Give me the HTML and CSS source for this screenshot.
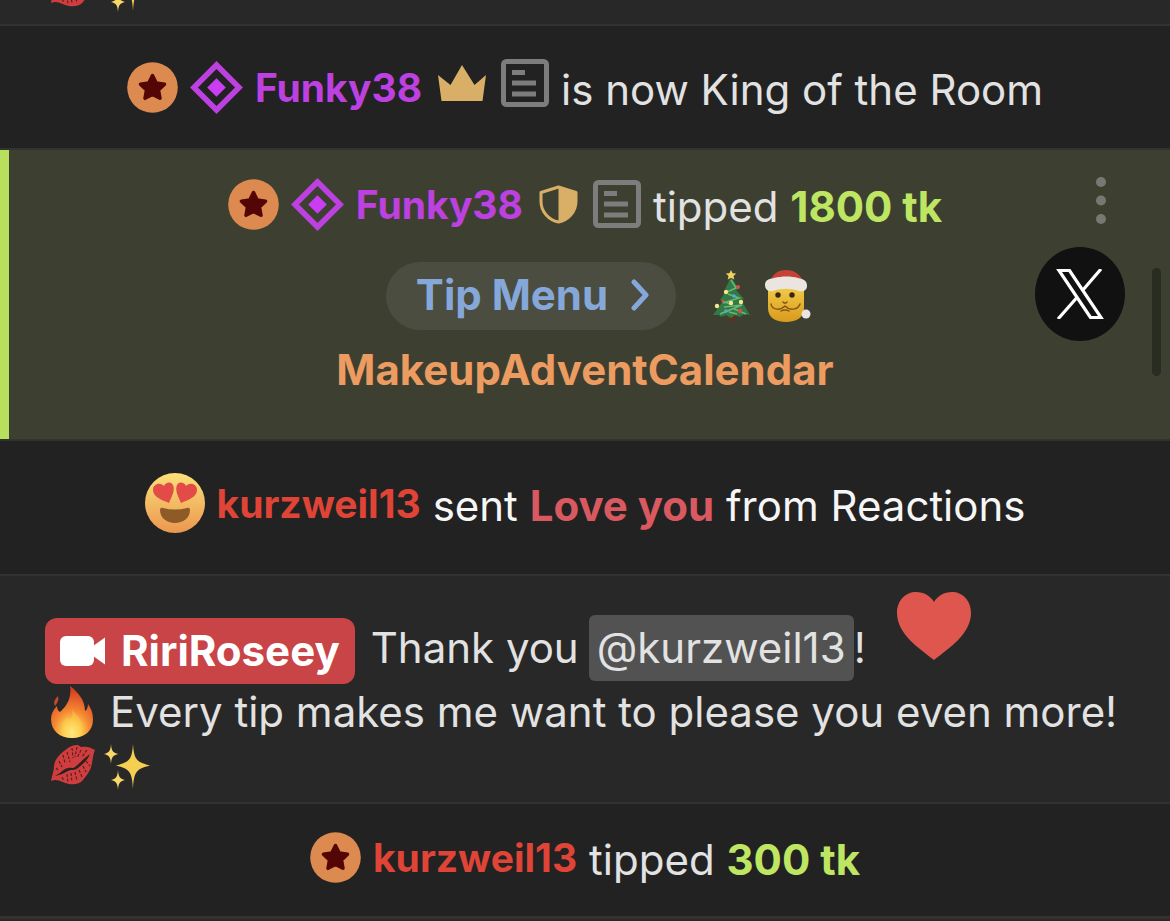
FILE: index.html
```html
<!DOCTYPE html>
<html lang="en">
<head>
  <meta charset="UTF-8">
  <meta name="viewport" content="width=device-width, initial-scale=1.0">
  <title>Room Chat</title>
  <link rel="stylesheet" href="styles.css">
</head>
<body>
  <!-- Shared icons -->
  <svg class="sprite" aria-hidden="true">
    <defs>
      <linearGradient id="faceFill" x1="0" y1="0" x2="0" y2="1">
        <stop offset="0" stop-color="#fbe07a"/>
        <stop offset="1" stop-color="#eb974e"/>
      </linearGradient>
      <radialGradient id="fireFill" cx="0.5" cy="0.9" r="0.85">
        <stop offset="0" stop-color="#fff9a0"/>
        <stop offset="0.25" stop-color="#fdcf4c"/>
        <stop offset="0.5" stop-color="#f58a34"/>
        <stop offset="1" stop-color="#d63a22"/>
      </radialGradient>
      <linearGradient id="santaFill" x1="0" y1="0" x2="0" y2="1">
        <stop offset="0" stop-color="#f3cf4c"/>
        <stop offset="1" stop-color="#d99a1c"/>
      </linearGradient>
    </defs>

    <symbol id="star" viewBox="0 0 51 51">
      <circle cx="25.5" cy="25.5" r="25.3" fill="#dc8a4f"/>
      <path d="M25.5 13.5l3.700 7.500 8.300 1.200-6 5.800 1.500 8.300-7.500-3.900-7.500 3.900 1.500-8.300-6-5.800 8.300-1.200z" fill="#540505" stroke="#540505" stroke-width="3.500" stroke-linejoin="round"/>
    </symbol>

    <symbol id="diamond" viewBox="0 0 53 53">
      <path d="M26.500 4L49 26.500 26.500 49 4 26.500z" fill="none" stroke="#bd40e0" stroke-width="5.600"/>
      <path d="M26.500 17.200l9.300 9.300-9.300 9.300-9.300-9.300z" fill="#ca3df2"/>
    </symbol>

    <symbol id="crown" viewBox="0 0 48 48">
      <path d="M0 16l12.500 10L24 6l12.500 20L48 16l-3.500 26h-41z" fill="#d9ae66"/>
    </symbol>

    <symbol id="shield" viewBox="0 0 39 39">
      <path d="M19.500 2L37 7.500v9C37 27 29 35 19.500 37 10 35 2 27 2 16.500v-9z" fill="none" stroke="#d9ae66" stroke-width="3" stroke-linejoin="round"/>
      <path d="M19.500 1.500L37 7.500v9C37 27 29 35 19.500 37z" fill="#d9ae66"/>
    </symbol>

    <symbol id="note" viewBox="0 0 48 48">
      <rect x="2.500" y="2.500" width="43" height="43" rx="3" fill="none" stroke="#7d7d7d" stroke-width="5"/>
      <path d="M11 13.500h13M11 24h24M11 35h24" stroke="#7d7d7d" stroke-width="5"/>
    </symbol>

    <symbol id="heart" viewBox="0 0 74 68">
      <path d="M37 68C22 56 0 42 0 21 0 8 9 0 19 0c8 0 14.500 4 18 10C40.500 4 47 0 55 0c10 0 19 8 19 21 0 21-22 35-37 47z" fill="#df564e"/>
    </symbol>

    <symbol id="heart-eyes" viewBox="0 0 60 60">
      <circle cx="30" cy="30" r="30" fill="url(#faceFill)"/>
      <path d="M24 30C17 27 8 24 8 17c0-5 5-7.500 9-5.500 1 .5 1.500 1 2 1.500C20.500 9 26 8 28 12c2.500 5-1.500 12-4 18z" fill="#e34b47"/>
      <path d="M36 30c7-3 16-6 16-13 0-5-5-7.500-9-5.500-1 .5-1.500 1-2 1.500C39.500 9 34 8 32 12c-2.500 5 1.500 12 4 18z" fill="#e34b47"/>
      <path d="M15 37c0-2 1.500-2.500 3-2 8 2 16 2 24 0 1.500-.5 3 0 3 2 0 8-7 13-15 13s-15-5-15-13z" fill="#8e5a28"/>
    </symbol>

    <symbol id="camera" viewBox="0 0 45 30">
      <rect x="0" y="0" width="34" height="30" rx="6" fill="#fff"/>
      <path d="M33 10L45 1.500v27L33 20z" fill="#fff"/>
    </symbol>

    <symbol id="fire" viewBox="0 0 44 54">
      <path d="M20 1c8 6 15 14 15 25 2-1 3-4 3-7 4 6 5 10 5 16 0 11-9 18-21 18S1 46 1 34c0-5 2-9 6-13 0 3 1 5 3 6C17 21 22 12 20 1z" fill="url(#fireFill)"/>
      <path d="M8 11c1 4 0 6-3 10-2-4 0-7 3-10z" fill="#c8482e"/>
      <path d="M22 24c5 7 10 11 10 18 0 6-5 10-10 10s-10-4-10-10c0-5 3-7 5-10 1 2 2 3 3 3 3-4 3-8 2-11z" fill="#fdd052" opacity="0.4"/>
    </symbol>

    <symbol id="lips" viewBox="0 0 46 42">
      <path d="M1 37C2 31 4 27 4 22 5 14 11 9 18 4c3-2 6-3 9-3 2 0 3 2 5 2 4-1 8 0 13 3-2 4-2 8-3 13-1 7-5 12-9 17-3 4-9 5-14 4C12 39 8 34 1 37z" fill="#cf3d3e"/>
      <path d="M5 32c6-3 8-7 13-8 3-1 4 1 7-1 4-3 8-8 15-13-3 7-7 10-12 14-4 3-6 1-10 3-4 2-7 4-13 5z" fill="#2f2020"/>
      <path d="M9 17l3 6M13 11l2 8M17 8l3 10M22 4l1 10M27 3l-2 10M31 6l-4 8M37 6l-5 7M6 24l3 3M12 33l2 4M17 30l1 8M21 29l1 9M25 28l2 9M29 26l3 7M33 22l3 6M36 17l4 5" stroke="#57201f" stroke-width="1.200" stroke-dasharray="3 1.500" fill="none"/>
    </symbol>

    <symbol id="sparkles" viewBox="0 0 46 46">
      <path d="M29 0c1 15 3 18 17 21.500C32 25 30 28 29 45c-1-17-3-20-17-23.500C26 18 28 15 29 0z" fill="#f5cf52"/>
      <path d="M7 0c.6 7 1.500 8.500 7.500 10C8.500 11.500 7.600 13 7 20 6.400 13 5.500 11.500 0 10 5.500 8.500 6.400 7 7 0z" fill="#f7d868"/>
      <path d="M14 26c.6 7 1.500 8.500 7 10-5.500 1.500-6.400 3-7 10-.6-7-1.500-8.500-7-10 5.500-1.500 6.400-3 7-10z" fill="#f7d868"/>
    </symbol>

    <symbol id="tree" viewBox="0 0 42 52">
      <rect x="18" y="45" width="8" height="6" fill="#5c3320"/>
      <path d="M21 7l8 12-3 1 8 9-3 1 9 15-6-1-4 3-5-2-4 3-5-3-5 2-2-2-6 0 10-14-3-1 7-10-2-1z" fill="#2f7a45"/>
      <path d="M21 10l5 8-9 4M18 24l11 4-16 5M14 37l18-2-22 9M24 39l12 5M12 31l8 3M19 42l8 2" stroke="#6eb478" stroke-width="1.600" fill="none"/>
      <path d="M21 0l1.600 3.200 3.600.4-2.700 2.500.8 3.500-3.300-1.800-3.300 1.800.8-3.500L15.800 3.600l3.600-.4z" fill="#f2d25c"/>
      <g fill="#f3e98c"><circle cx="16" cy="22" r="2.200"/><circle cx="31" cy="32" r="2.200"/><circle cx="7" cy="36" r="2.200"/><circle cx="21" cy="33" r="2.200"/></g>
      <g fill="#cc5350"><circle cx="28" cy="17" r="2"/><circle cx="30" cy="41" r="2.300"/><circle cx="13" cy="31" r="1.500"/></g>
      <g fill="#5ca5d4"><circle cx="24" cy="26" r="1.800"/><circle cx="16" cy="41" r="1.800"/></g>
    </symbol>

    <symbol id="santa" viewBox="0 0 48 52">
      <path d="M4 14h36v24c0 9-7 14-18 14S4 47 4 38z" fill="url(#santaFill)"/>
      <path d="M5 14C8 4 14 0 22 0s15 4 18 14z" fill="#c74236"/>
      <path d="M1 15C1 10 5 9 10 8c8-2 17-2 24 0 6 1 9 3 9 8 0 4-3 6-8 5-8-3-18-3-26 0-5 1-8-2-8-6z" fill="#ebe5e1"/>
      <circle cx="42" cy="44" r="4.500" fill="#e9e5e2"/>
      <circle cx="14" cy="25" r="2.700" fill="#3c2610"/>
      <circle cx="28" cy="25" r="2.700" fill="#3c2610"/>
      <path d="M19 32c1 1.500 3 1.500 4 0M7 34c1 6 9 7 14 2 5 5 13 4 15-2M17 41c2-1.500 6-1.500 8 0" stroke="#885716" stroke-width="1.500" fill="none" stroke-linecap="round"/>
    </symbol>
  </svg>

  <main class="chat">
    <!-- Scrolled message, only its last line is visible -->
    <div class="row row-alt row-cut">
      <div class="line line-last">
        <svg class="emoji-lips"><use href="#lips"/></svg>
        <svg class="emoji-sparkles"><use href="#sparkles"/></svg>
      </div>
    </div>

    <div class="row notice king">
      <svg class="star"><use href="#star"/></svg>
      <svg class="diamond"><use href="#diamond"/></svg>
      <a href="#" class="name purple">Funky38</a>
      <span class="badges">
        <svg class="crown"><use href="#crown"/></svg>
        <svg class="note"><use href="#note"/></svg>
      </span>
      <span class="text">is now King of the Room</span>
    </div>

    <div class="row tip-row">
      <div class="notice">
        <svg class="star"><use href="#star"/></svg>
        <svg class="diamond"><use href="#diamond"/></svg>
        <a href="#" class="name purple">Funky38</a>
        <span class="badges">
          <svg class="shield"><use href="#shield"/></svg>
          <svg class="note"><use href="#note"/></svg>
        </span>
        <span class="text">tipped <b class="tokens">1800 tk</b></span>
      </div>
      <div class="menu-line">
        <button class="tip-menu">Tip Menu
          <svg class="chevron" viewBox="0 0 18 32"><path d="M3 3l12 13L3 29" fill="none" stroke="#86a7d9" stroke-width="5" stroke-linecap="round" stroke-linejoin="round"/></svg>
        </button>
        <svg class="emoji-tree"><use href="#tree"/></svg>
        <svg class="emoji-santa"><use href="#santa"/></svg>
      </div>
      <div class="tip-item">MakeupAdventCalendar</div>

      <button class="dots" aria-label="More options">
        <svg viewBox="0 0 10 47"><g fill="#777873"><circle cx="5" cy="5" r="5"/><circle cx="5" cy="23.500" r="5"/><circle cx="5" cy="42" r="5"/></g></svg>
      </button>
      <a href="#" class="share" aria-label="Share on X">
        <svg viewBox="0 0 48 50"><path d="M3 1.500h10.500L45 48.500H34.500zM45 0L26.500 21.500M20.500 29L2 50" fill="none" stroke="#fff" stroke-width="3.200"/></svg>
      </a>
      <div class="scroll-thumb"></div>
    </div>

    <div class="row notice reaction">
      <svg class="heart-eyes"><use href="#heart-eyes"/></svg>
      <a href="#" class="name red">kurzweil13</a>
      <span class="text">sent <b class="love">Love you</b> from Reactions</span>
    </div>

    <div class="row row-alt message">
      <div class="line line-first">
        <a href="#" class="broadcaster">
          <svg class="camera"><use href="#camera"/></svg>
          RiriRoseey
        </a>
        <span class="thanks">Thank you</span>
        <span class="mention">@kurzweil13</span>
        <span class="bang">!</span>
        <svg class="heart"><use href="#heart"/></svg>
      </div>
      <div class="line">
        <svg class="emoji-fire"><use href="#fire"/></svg>
        <span>Every tip makes me want to please you even more!</span>
      </div>
      <div class="line line-last">
        <svg class="emoji-lips"><use href="#lips"/></svg>
        <svg class="emoji-sparkles"><use href="#sparkles"/></svg>
      </div>
    </div>

    <div class="row notice last-tip">
      <svg class="star"><use href="#star"/></svg>
      <a href="#" class="name red">kurzweil13</a>
      <span class="text">tipped <b class="tokens">300 tk</b></span>
    </div>
  </main>
</body>
</html>
```
FILE: styles.css
```css
* {
  box-sizing: border-box;
}

body {
  margin: 0;
  background: #282828;
  color: #e2e2e2;
  font-family: Inter, "Liberation Sans", sans-serif;
  font-size: 42px;
  line-height: 56px;
  white-space: nowrap;
  overflow: hidden;
}

a {
  text-decoration: none;
}

svg {
  display: block;
  flex: none;
}

.sprite {
  position: absolute;
  width: 0;
  height: 0;
}

.row {
  background: #222222;
  border-bottom: 2px solid #323232;
}

.row-alt {
  background: #282828;
}

/* Centered notices */
.notice {
  display: flex;
  justify-content: center;
  align-items: center;
  gap: 12px;
}

.king {
  padding: 30px 0;
}

.name {
  padding-top: 2px;
  font-size: 39px;
  font-weight: 700;
}

.text {
  padding-top: 6px;
}

.purple {
  color: #bd40e0;
}

.red {
  color: #df4437;
}

.tokens {
  color: #bee662;
}

.love {
  color: #d95960;
}

.badges {
  display: flex;
  align-items: center;
  gap: 15px;
  margin-left: 4px;
}

.king .badges {
  padding-bottom: 8px;
}

.star {
  width: 51px;
  height: 51px;
}

.diamond {
  width: 53px;
  height: 53px;
}

.crown,
.note {
  width: 48px;
  height: 48px;
}

.shield {
  width: 39px;
  height: 39px;
}

/* Highlighted tip */
.tip-row {
  position: relative;
  padding: 23px 0 41px;
  background: #3d4031;
  box-shadow: inset 9px 0 #b9e05c;
}

.menu-line {
  display: flex;
  justify-content: center;
  align-items: center;
  margin: 27px 0 12px;
  padding-left: 28px;
}

.tip-menu {
  display: flex;
  align-items: center;
  gap: 22px;
  height: 68px;
  padding: 0 26px 2px 30px;
  border: 0;
  border-radius: 34px;
  background: #4a4d3f;
  color: #86a7d9;
  font: inherit;
  font-weight: 700;
  cursor: pointer;
}

.chevron {
  width: 20px;
  height: 32px;
}

.emoji-tree {
  width: 42px;
  height: 52px;
  margin-left: 34px;
}

.emoji-santa {
  width: 48px;
  height: 52px;
  margin-left: 12px;
}

.tip-item {
  color: #ec9b61;
  font-weight: 700;
  text-align: center;
}

.dots {
  position: absolute;
  top: 27px;
  right: 64px;
  padding: 0;
  border: 0;
  background: none;
  cursor: pointer;
}

.dots svg {
  width: 10px;
  height: 47px;
}

.share {
  display: flex;
  justify-content: center;
  align-items: center;
  position: absolute;
  top: 97px;
  right: 45px;
  width: 90px;
  height: 94px;
  border-radius: 50%;
  background: #101110;
}

.share svg {
  width: 48px;
  height: 50px;
}

.scroll-thumb {
  position: absolute;
  top: 118px;
  right: 9px;
  width: 9px;
  height: 108px;
  border-radius: 5px;
  background: #292c20;
}

.reaction {
  padding: 31px 0 40px;
  color: #f6f6f6;
}

.heart-eyes {
  width: 60px;
  height: 60px;
}

/* Broadcaster message */
.message {
  padding: 16px 45px 12px;
}

.line {
  display: flex;
  align-items: center;
  gap: 16px;
  padding-left: 5px;
}

.line-first {
  align-items: flex-end;
  gap: 0;
  height: 92px;
  padding-left: 0;
  line-height: 66px;
}

.line-last {
  align-items: flex-end;
  gap: 8px;
  height: 50px;
}

.broadcaster {
  display: flex;
  align-items: center;
  gap: 16px;
  height: 66px;
  padding: 0 15px;
  border-radius: 12px;
  background: #c84446;
  color: #ffffff;
  font-weight: 700;
}

.camera {
  width: 45px;
  height: 30px;
}

.thanks {
  margin: 0 10px 3px 16px;
}

.mention {
  margin-bottom: 3px;
  padding: 0 8px;
  border-radius: 6px;
  background: #525252;
}

.bang {
  margin-bottom: 3px;
}

.heart {
  align-self: flex-start;
  width: 74px;
  height: 68px;
  margin-left: 31px;
}

.emoji-fire {
  width: 44px;
  height: 54px;
}

.emoji-lips {
  width: 46px;
  height: 42px;
  margin-bottom: 4px;
}

.emoji-sparkles {
  width: 46px;
  height: 46px;
}

/* Older line, clipped by the top edge of the chat */
.row-cut {
  display: flex;
  align-items: flex-end;
  height: 26px;
  padding: 0 45px 12px;
}

.last-tip {
  padding: 22px 0 28px;
  border-bottom-width: 3px;
}
```
